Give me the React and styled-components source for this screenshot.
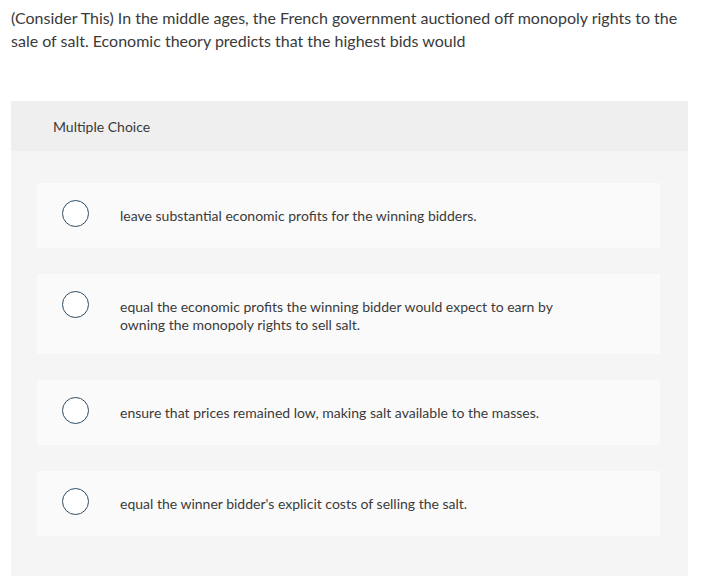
import styled, { createGlobalStyle } from "styled-components";

const GlobalStyle = createGlobalStyle`
  body {
    margin: 0;
    background: #ffffff;
    font-family: Lato, "Open Sans", "Liberation Sans", sans-serif;
    color: #3a3a3a;
  }
`;

const Page = styled.div`
  width: 706px;
  height: 576px;
  overflow: hidden;
  padding: 6px 18px 0 11px;
  box-sizing: border-box;
`;

const Question = styled.p`
  margin: 0;
  font-size: 16px;
  line-height: 23px;
  color: #3a3a3a;
`;

const Panel = styled.div`
  margin-top: 49px;
  background: #f5f5f5;
  padding-bottom: 60px;
`;

const PanelHeader = styled.div`
  height: 50px;
  background: #efefef;
  display: flex;
  align-items: center;
  padding-left: 42px;
  font-size: 14px;
  color: #3a3a3a;
`;

const Choices = styled.div`
  display: flex;
  flex-direction: column;
  gap: 26px;
  padding: 32px 28px 0 26px;
`;

const Choice = styled.label`
  display: flex;
  align-items: flex-start;
  background: #fafafa;
  padding: 17px 20px 21px 25px;
  cursor: pointer;
`;

const Radio = styled.span`
  flex: 0 0 auto;
  box-sizing: border-box;
  width: 27px;
  height: 27px;
  border: 1.5px solid #2e4b64;
  border-radius: 50%;
  background: #ffffff;
`;

const ChoiceText = styled.span`
  margin-left: 31px;
  margin-top: 7px;
  max-width: 440px;
  font-size: 14px;
  line-height: 17.5px;
  color: #3a3a3a;
`;

const choices = [
  "leave substantial economic profits for the winning bidders.",
  "equal the economic profits the winning bidder would expect to earn by owning the monopoly rights to sell salt.",
  "ensure that prices remained low, making salt available to the masses.",
  "equal the winner bidder's explicit costs of selling the salt.",
];

export default function App() {
  return (
    <>
      <GlobalStyle />
      <Page>
        <Question>
          (Consider This) In the middle ages, the French government auctioned off monopoly rights to the
          sale of salt. Economic theory predicts that the highest bids would
        </Question>
        <Panel>
          <PanelHeader>Multiple Choice</PanelHeader>
          <Choices>
            {choices.map((c) => (
              <Choice key={c}>
                <Radio />
                <ChoiceText>{c}</ChoiceText>
              </Choice>
            ))}
          </Choices>
        </Panel>
      </Page>
    </>
  );
}
